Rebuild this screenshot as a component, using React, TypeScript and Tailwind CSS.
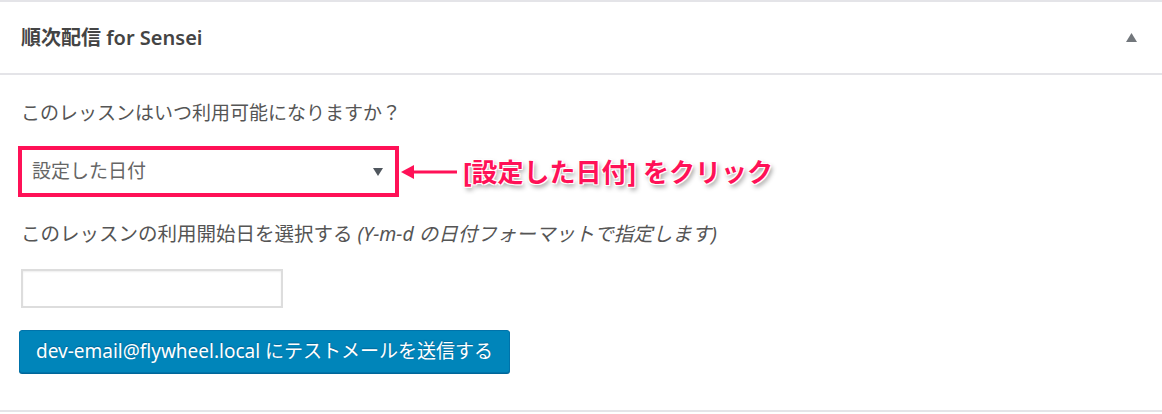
import React from "react";

const font = "font-['Noto_Sans','Noto_Sans_CJK_JP',sans-serif]";

function Callout() {
  return (
    <div className="flex items-center">
      <svg width="62" height="20" viewBox="0 0 62 20" className="ml-[1px]">
        <line x1="8" y1="10" x2="57" y2="10" stroke="#ff1157" strokeWidth="3" />
        <polygon points="1,10 14,3 14,17" fill="#ff1157" />
      </svg>
      <span
        className={`ml-[1px] text-[26px] font-bold leading-none text-[#ff1157] [text-shadow:0_0_2px_#fff,1px_1px_0_#fff,-1px_-1px_0_#fff,1px_-1px_0_#fff,-1px_1px_0_#fff,2px_3px_5px_rgba(0,0,0,0.45)] ${font}`}
      >
        [設定した日付] をクリック
      </span>
    </div>
  );
}

export default function App() {
  return (
    <div className={`h-[414px] w-[1162px] bg-white ${font}`}>
      <div className="border-y-2 border-[#e4e4e8]">
        <div className="flex h-[73px] items-center justify-between border-b-2 border-[#e4e4e8] pl-[21px] pr-[25px]">
          <h2 className="text-[20px] font-semibold text-[#444]">順次配信 for Sensei</h2>
          <svg width="11" height="10" viewBox="0 0 11 10">
            <polygon points="5.5,0 11,9 0,9" fill="#72777c" />
          </svg>
        </div>

        <div className="h-[335px] pl-[18px] pt-[24px]">
          <p className="ml-[3px] text-[19px] leading-[28px] text-[#555]">
            このレッスンはいつ利用可能になりますか？
          </p>

          <div className="mt-[19px] flex items-center">
            <div className="flex h-[51px] w-[381px] items-center justify-between border-[4px] border-[#ff1157] bg-white pl-[10px] pr-[12px]">
              <span className="text-[19px] text-[#666]">設定した日付</span>
              <svg width="10" height="8" viewBox="0 0 10 8">
                <polygon points="0,0 10,0 5,8" fill="#50575e" />
              </svg>
            </div>
            <Callout />
          </div>

          <p className="ml-[3px] mt-[23px] text-[19.5px] leading-[28px] text-[#555]">
            このレッスンの利用開始日を選択する{" "}
            <i className="italic">(Y-m-d の日付フォーマットで指定します)</i>
          </p>

          <div className="ml-[3px] mt-[21px] h-[39px] w-[262px] border-2 border-[#dddddd] bg-white shadow-[inset_0_1px_2px_rgba(0,0,0,0.07)]" />

          <button className="ml-[1px] mt-[22px] flex h-[43px] w-[491px] items-center justify-center rounded-[3px] border border-[#0073aa] bg-[#0085ba] text-[19px] text-white shadow-[0_1px_0_#006799] [text-shadow:0_-1px_1px_#006799]">
            dev-email@flywheel.local にテストメールを送信する
          </button>
        </div>
      </div>
    </div>
  );
}
